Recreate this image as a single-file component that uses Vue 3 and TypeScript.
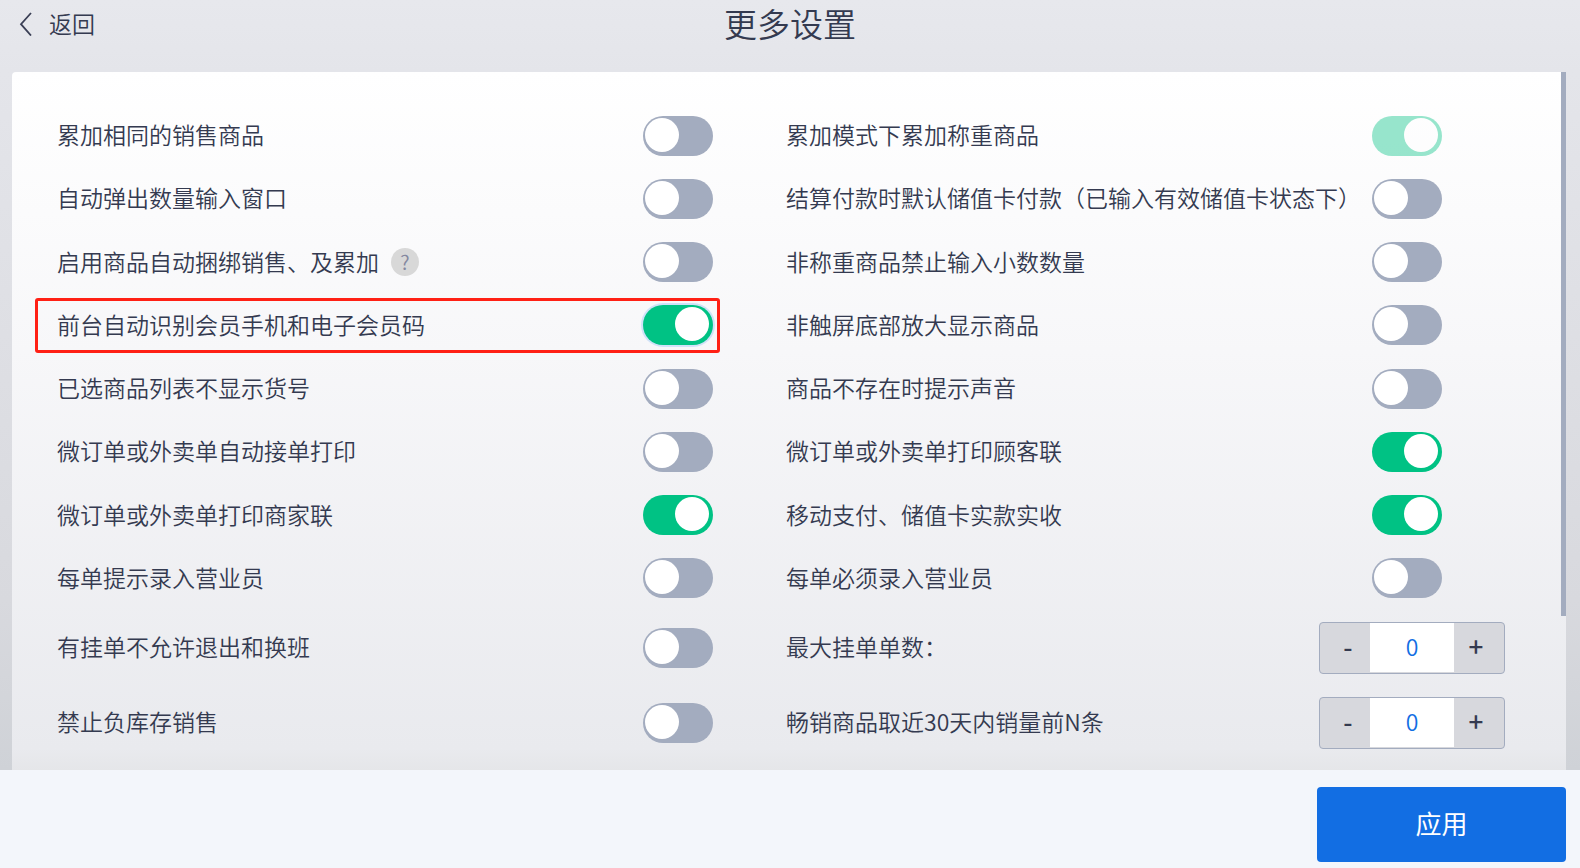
<script setup lang="ts">
import { reactive } from 'vue'

interface Setting {
  id: string
  label: string
  kind: 'toggle' | 'number'
  on?: boolean
  disabled?: boolean
  help?: boolean
  active?: boolean
  value?: number
}

const toggle = (id: string, label: string, on = false, extra: Partial<Setting> = {}): Setting => ({
  id,
  label,
  kind: 'toggle',
  on,
  ...extra,
})

const settings = reactive<Setting[]>([
  toggle('merge-same', '累加相同的销售商品'),
  toggle('merge-weighed', '累加模式下累加称重商品', true, { disabled: true }),
  toggle('quantity-popup', '自动弹出数量输入窗口'),
  toggle('default-card', '结算付款时默认储值卡付款（已输入有效储值卡状态下）'),
  toggle('bundle', '启用商品自动捆绑销售、及累加', false, { help: true }),
  toggle('no-decimal', '非称重商品禁止输入小数数量'),
  toggle('detect-member', '前台自动识别会员手机和电子会员码', true, { active: true }),
  toggle('enlarge', '非触屏底部放大显示商品'),
  toggle('hide-code', '已选商品列表不显示货号'),
  toggle('missing-sound', '商品不存在时提示声音'),
  toggle('auto-accept', '微订单或外卖单自动接单打印'),
  toggle('customer-copy', '微订单或外卖单打印顾客联', true),
  toggle('merchant-copy', '微订单或外卖单打印商家联', true),
  toggle('actual-amount', '移动支付、储值卡实款实收', true),
  toggle('prompt-clerk', '每单提示录入营业员'),
  toggle('require-clerk', '每单必须录入营业员'),
  toggle('block-exit', '有挂单不允许退出和换班'),
  { id: 'max-held', label: '最大挂单单数：', kind: 'number', value: 0 },
  toggle('no-negative', '禁止负库存销售'),
  { id: 'top-n', label: '畅销商品取近30天内销量前N条', kind: 'number', value: 0 },
])

function step(item: Setting, delta: number) {
  item.value = Math.max(0, Number(item.value ?? 0) + delta)
}
</script>

<template>
  <div class="page" lang="zh-CN">
    <header class="header">
      <button class="back" type="button">
        <svg width="14" height="26" viewBox="0 0 14 26" fill="none" aria-hidden="true">
          <path d="M12 3 L2 14.2 L12 25.5" stroke="#3a3f55" stroke-width="1.8" />
        </svg>
        <span>返回</span>
      </button>
      <h1 class="title">更多设置</h1>
    </header>

    <main class="panel">
      <div v-for="item in settings" :key="item.id" class="row" :class="{ marked: item.active }">
        <div class="caption">
          <label :for="item.id">{{ item.label }}</label>
          <button v-if="item.help" class="help" type="button" aria-label="帮助">?</button>
        </div>
        <input
          v-if="item.kind === 'toggle'"
          :id="item.id"
          v-model="item.on"
          class="switch"
          :class="{ ring: item.active }"
          type="checkbox"
          role="switch"
          :disabled="item.disabled"
        />
        <div v-else class="stepper">
          <button class="minus" type="button" aria-label="减少" @click="step(item, -1)">-</button>
          <input :id="item.id" v-model="item.value" type="text" inputmode="numeric" />
          <button class="plus" type="button" aria-label="增加" @click="step(item, 1)">+</button>
        </div>
      </div>
      <div class="thumb"></div>
    </main>

    <footer class="footer">
      <button class="apply" type="button">应用</button>
    </footer>
  </div>
</template>

<style>
body {
  margin: 0;
}
</style>

<style scoped>
.page {
  box-sizing: border-box;
  display: flex;
  flex-direction: column;
  min-height: 100vh;
  color: #343a50;
  font-family: 'Noto Sans CJK SC', sans-serif;
  font-size: 23px;
  font-weight: 350;
  line-height: 32px;
  background: linear-gradient(#e7e8ed 0, #e4e5ea 72px, #d8d9de 600px, #cfd2d7 770px);
}

button,
input {
  box-sizing: border-box;
  margin: 0;
  padding: 0;
  border: 0;
  color: inherit;
  font: inherit;
}

.header {
  display: grid;
  grid-template-columns: 1fr auto 1fr;
  align-items: start;
  height: 72px;
}

.back {
  display: flex;
  align-items: center;
  justify-self: start;
  gap: 16px;
  height: 46px;
  padding-left: 19px;
  background: none;
}

.title {
  margin: 0;
  font-size: 33px;
  font-weight: 350;
  line-height: 46px;
}

.panel {
  position: relative;
  flex: 1;
  display: grid;
  grid-template-columns: 1fr 1fr;
  grid-template-rows: repeat(8, minmax(56px, 1fr)) 75px 75px;
  margin: 0 14px 0 12px;
  padding: 32px 51px 10px 45px;
  border-radius: 4px 0 0 0;
  background: linear-gradient(#ffffff 0, #f7f7f9 40%, #e9eaee 97%, #e5e6e9 100%);
}

.row {
  position: relative;
  display: flex;
  align-items: center;
  justify-content: space-between;
}

.marked::after {
  content: '';
  position: absolute;
  inset: 4px 66px 4px -22px;
  border: 3px solid #ff2015;
  border-radius: 3px;
  pointer-events: none;
}

.caption {
  display: flex;
  align-items: center;
  gap: 12px;
  white-space: nowrap;
}

.caption label {
  padding-bottom: 3px;
}

.help {
  width: 28px;
  height: 28px;
  border-radius: 50%;
  color: #8488a0;
  background: #d8d8d8;
  font-size: 20px;
  line-height: 26px;
}

.switch {
  flex: none;
  appearance: none;
  width: 70px;
  height: 40px;
  margin-right: 73px;
  padding: 2px;
  border-radius: 20px;
  background: #a3acbf;
}

.switch::before {
  content: '';
  display: block;
  width: 34px;
  height: 34px;
  border-radius: 50%;
  background: #ffffff;
}

.switch:checked {
  background: #00c284;
}

.switch:checked::before {
  margin-left: 30px;
}

.switch:disabled {
  opacity: 0.4;
}

.ring {
  box-shadow: 0 0 0 2px #d0e2f8;
}

.stepper {
  box-sizing: border-box;
  display: flex;
  width: 186px;
  height: 52px;
  margin-right: 10px;
  overflow: hidden;
  border: 1px solid #a3acbf;
  border-radius: 4px;
  background: #d7d8dd;
}

.stepper button {
  flex: 1;
  padding-bottom: 4px;
  background: none;
  font-size: 26px;
  font-weight: 500;
}

.stepper .minus {
  padding-left: 6px;
}

.stepper .plus {
  padding-right: 6px;
}

.stepper input {
  width: 84px;
  height: 49px;
  padding-bottom: 3px;
  color: #126ee3;
  background: #ffffff;
  text-align: center;
}

.thumb {
  position: absolute;
  top: 0;
  right: 0;
  width: 5px;
  height: 78%;
  background: #a3acbf;
}

.footer {
  display: flex;
  justify-content: flex-end;
  padding: 17px 14px 6px;
  background: #f3f6fb;
}

.apply {
  width: 249px;
  height: 75px;
  padding-bottom: 3px;
  border-radius: 4px;
  color: #ffffff;
  background: #126ee3;
  font-size: 26px;
  font-weight: 400;
}
</style>
